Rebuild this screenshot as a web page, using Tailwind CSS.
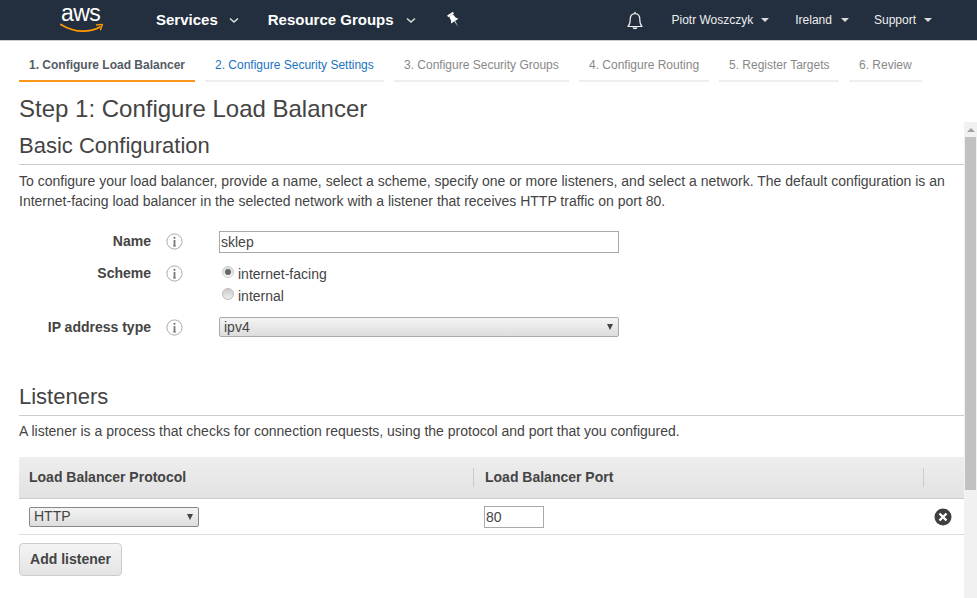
<!DOCTYPE html>
<html lang="en">
<head>
    <meta charset="UTF-8" />
    <title>Load Balancer Creation</title>
    <script src="https://cdn.jsdelivr.net/npm/@tailwindcss/browser@4"></script>
</head>
<body class="h-[598px] overflow-hidden bg-white font-['Liberation_Sans',Arial,sans-serif] text-[#444]">

    <!-- Top nav -->
    <nav class="h-[41px] flex items-center bg-[#232f3e] border-b border-[#ccc] text-white">
        <div class="w-[156px] shrink-0 pl-[61px] h-full relative">
            <span class="block text-[23px] leading-[27px] tracking-[-0.6px]">aws</span>
            <svg class="absolute left-[60px] top-[23px]" width="44" height="10" viewBox="0 0 44 10" fill="none">
                <path d="M0.8 1.5C9 6.5 17 8.2 23 8.2C30 8.2 35 6.8 40 4" stroke="#f90" stroke-width="1.7" stroke-linecap="round"></path>
                <path d="M36.5 2L42.4 1.4L40.6 6.8" stroke="#f90" stroke-width="1.4" stroke-linecap="round" stroke-linejoin="round"></path>
            </svg>
        </div>
        <span class="text-[15px] font-bold">Services</span>
        <svg class="ml-[11px]" width="10" height="7" viewBox="0 0 10 7" fill="none"><path d="M1 1.5L5 5L9 1.5" stroke="#ddd" stroke-width="1.6"></path></svg>
        <span class="ml-[29px] text-[15px] font-bold">Resource Groups</span>
        <svg class="ml-[12px]" width="10" height="7" viewBox="0 0 10 7" fill="none"><path d="M1 1.5L5 5L9 1.5" stroke="#ddd" stroke-width="1.6"></path></svg>
        <svg class="ml-[31px] mb-[1px]" width="14" height="16" viewBox="0 0 14 16">
            <g transform="rotate(-32 7 8)" fill="#fff">
                <rect x="3.6" y="0.5" width="6.8" height="2"></rect>
                <path d="M4.8 2.5H9.2L9.8 7L11.4 9.4H2.6L4.2 7Z"></path>
                <path d="M6.5 9.4H7.5L7 16Z"></path>
            </g>
        </svg>

        <div class="ml-auto flex items-center text-[12px] text-[#eee]">
            <svg width="16" height="19" viewBox="0 0 16 19" fill="none" stroke="#eee" stroke-width="1.2">
                <path d="M1 15.5C3 13.5 3.2 11.5 3.2 8.5C3.2 5 5 2.6 8 2.6C11 2.6 12.8 5 12.8 8.5C12.8 11.5 13 13.5 15 15.5Z" stroke-linejoin="round"></path>
                <path d="M8 0.8V2.6"></path>
                <path d="M6 16.5C6.3 18 9.7 18 10 16.5" fill="#eee"></path>
            </svg>
            <span class="ml-[28px]">Piotr Woszczyk</span>
            <span class="ml-[8px] w-0 h-0 border-x-[4px] border-x-transparent border-t-[4px] border-t-[#ddd]"></span>
            <span class="ml-[26px]">Ireland</span>
            <span class="ml-[9px] w-0 h-0 border-x-[4px] border-x-transparent border-t-[4px] border-t-[#ddd]"></span>
            <span class="ml-[25px]">Support</span>
            <span class="ml-[8px] mr-[45px] w-0 h-0 border-x-[4px] border-x-transparent border-t-[4px] border-t-[#ddd]"></span>
        </div>
    </nav>

    <!-- Wizard steps -->
    <div class="flex gap-[10px] pl-[19px] pt-[17px] text-[12px] leading-[14px] text-[#888]">
        <div class="w-[176px] h-[24px] pl-[10px] border-b-2 border-[#f7981d] font-bold text-[#545b64]">1. Configure Load Balancer</div>
        <div class="w-[179px] h-[24px] pl-[10px] border-b-2 border-[#eee] text-[#1a73c0]">2. Configure Security Settings</div>
        <div class="w-[175px] h-[24px] pl-[10px] border-b-2 border-[#eee]">3. Configure Security Groups</div>
        <div class="w-[130px] h-[24px] pl-[10px] border-b-2 border-[#eee]">4. Configure Routing</div>
        <div class="w-[120px] h-[24px] pl-[10px] border-b-2 border-[#eee]">5. Register Targets</div>
        <div class="w-[73px] h-[24px] pl-[10px] border-b-2 border-[#eee]">6. Review</div>
    </div>

    <h1 class="pl-[19px] pt-[12px] text-[24px] leading-[30px] text-[#444]">Step 1: Configure Load Balancer</h1>

    <div class="flex h-[476px] mt-[-2px]">
        <main class="flex-1 min-w-0 overflow-hidden pl-[19px]">
            <h2 class="mt-[9px] h-[34px] text-[22px] leading-[30px] border-b border-[#ccc]">Basic Configuration</h2>
            <p class="mt-[6px] text-[14px] leading-[20px]">To configure your load balancer, provide a name, select a scheme, specify one or more listeners, and select a network. The default configuration is an Internet-facing load balancer in the selected network with a listener that receives HTTP traffic on port 80.</p>

            <!-- Form -->
            <div class="mt-[19px] grid grid-cols-[132px_68px_400px] text-[14px] leading-[20px]">
                <label class="h-[32px] pt-[1px] text-right font-bold">Name</label>
                <div class="pl-[15px] pt-[3px]">
                    <svg width="17" height="17" viewBox="0 0 17 17" fill="none">
                        <circle cx="8.5" cy="8.5" r="7.6" stroke="#aaa"></circle>
                        <circle cx="8.5" cy="4.8" r="1.1" fill="#777"></circle>
                        <path d="M8.5 7V13" stroke="#777" stroke-width="1.8"></path>
                        <path d="M7 13H10" stroke="#777"></path>
                    </svg>
                </div>
                <input class="mt-[1px] h-[22px] w-[400px] border border-[#aaa] px-[1px] text-[14px] text-[#444]" value="sklep" />

                <label class="pt-[1px] text-right font-bold">Scheme</label>
                <div class="pl-[15px] pt-[3px]">
                    <svg width="17" height="17" viewBox="0 0 17 17" fill="none">
                        <circle cx="8.5" cy="8.5" r="7.6" stroke="#aaa"></circle>
                        <circle cx="8.5" cy="4.8" r="1.1" fill="#777"></circle>
                        <path d="M8.5 7V13" stroke="#777" stroke-width="1.8"></path>
                        <path d="M7 13H10" stroke="#777"></path>
                    </svg>
                </div>
                <div class="h-[54px] pl-[3px]">
                    <div class="flex items-center h-[22px]">
                        <span class="mb-[2px] w-[12px] h-[12px] rounded-full border border-[#ccc] bg-gradient-to-b from-[#ddd] to-[#f4f4f4] flex items-center justify-center"><span class="w-[6px] h-[6px] rounded-full bg-[#666]"></span></span>
                        <span class="ml-[4px] mt-[2px]">internet-facing</span>
                    </div>
                    <div class="flex items-center h-[22px]">
                        <span class="mb-[2px] w-[12px] h-[12px] rounded-full border border-[#bbb] bg-gradient-to-b from-[#ccc] to-[#eee]"></span>
                        <span class="ml-[4px] mt-[2px]">internal</span>
                    </div>
                </div>

                <label class="pt-[1px] text-right font-bold">IP address type</label>
                <div class="pl-[15px] pt-[3px]">
                    <svg width="17" height="17" viewBox="0 0 17 17" fill="none">
                        <circle cx="8.5" cy="8.5" r="7.6" stroke="#aaa"></circle>
                        <circle cx="8.5" cy="4.8" r="1.1" fill="#777"></circle>
                        <path d="M8.5 7V13" stroke="#777" stroke-width="1.8"></path>
                        <path d="M7 13H10" stroke="#777"></path>
                    </svg>
                </div>
                <div class="mt-[1px] flex items-center justify-between h-[20px] w-[400px] border border-[#aaa] rounded-[2px] bg-gradient-to-b from-[#f4f4f4] to-[#ddd] pl-[4px] pr-[5px]">
                    <span>ipv4</span>
                    <span class="w-0 h-0 border-x-[3px] border-x-transparent border-t-[6px] border-t-[#444]"></span>
                </div>
            </div>

            <h2 class="mt-[45px] h-[34px] text-[22px] leading-[30px] border-b border-[#ccc]">Listeners</h2>
            <p class="mt-[5px] text-[14px] leading-[20px]">A listener is a process that checks for connection requests, using the protocol and port that you configured.</p>

            <!-- Listeners table -->
            <div class="mt-[16px] text-[14px]">
                <div class="flex items-center h-[42px] bg-gradient-to-b from-[#eee] to-[#e2e2e2] border-b border-[#ccc] font-bold">
                    <div class="w-[455px] h-[19px] pl-[10px] border-r border-[#ccc] leading-[19px]">Load Balancer Protocol</div>
                    <div class="w-[450px] h-[19px] pl-[11px] border-r border-[#ccc] leading-[19px]">Load Balancer Port</div>
                </div>
                <div class="flex items-center h-[36px] border-b border-[#ddd]">
                    <div class="w-[455px] pl-[10px]">
                        <div class="flex items-center justify-between h-[20px] w-[170px] border border-[#888] rounded-[2px] bg-gradient-to-b from-[#f4f4f4] to-[#ddd] pl-[4px] pr-[5px]">
                            <span>HTTP</span>
                            <span class="w-0 h-0 border-x-[3px] border-x-transparent border-t-[6px] border-t-[#444]"></span>
                        </div>
                    </div>
                    <div class="pl-[10px]">
                        <input class="block h-[22px] w-[60px] border border-[#aaa] px-[1px] text-[14px] text-[#444]" value="80" />
                    </div>
                    <svg class="ml-auto mr-[12px]" width="18" height="18" viewBox="0 0 18 18">
                        <circle cx="9" cy="9" r="8.5" fill="#3f3f3f"></circle>
                        <path d="M5.5 5.5L12.5 12.5M12.5 5.5L5.5 12.5" stroke="#fff" stroke-width="2.4"></path>
                    </svg>
                </div>
                <button class="mt-[8px] h-[33px] w-[103px] rounded-[4px] border border-[#ccc] bg-gradient-to-b from-[#f4f4f4] to-[#e4e4e4] font-bold text-[14px] text-[#444]">Add listener</button>
            </div>
        </main>

        <!-- Scrollbar -->
        <div class="w-[13px] shrink-0 bg-[#f1f1f1] flex flex-col items-center">
            <span class="mt-[6px] w-0 h-0 border-x-[4px] border-x-transparent border-b-[4px] border-b-[#a3a3a3]"></span>
            <div class="mt-[5px] w-[11px] h-[353px] bg-[#c1c1c1]"></div>
        </div>
    </div>
</body>
</html>
